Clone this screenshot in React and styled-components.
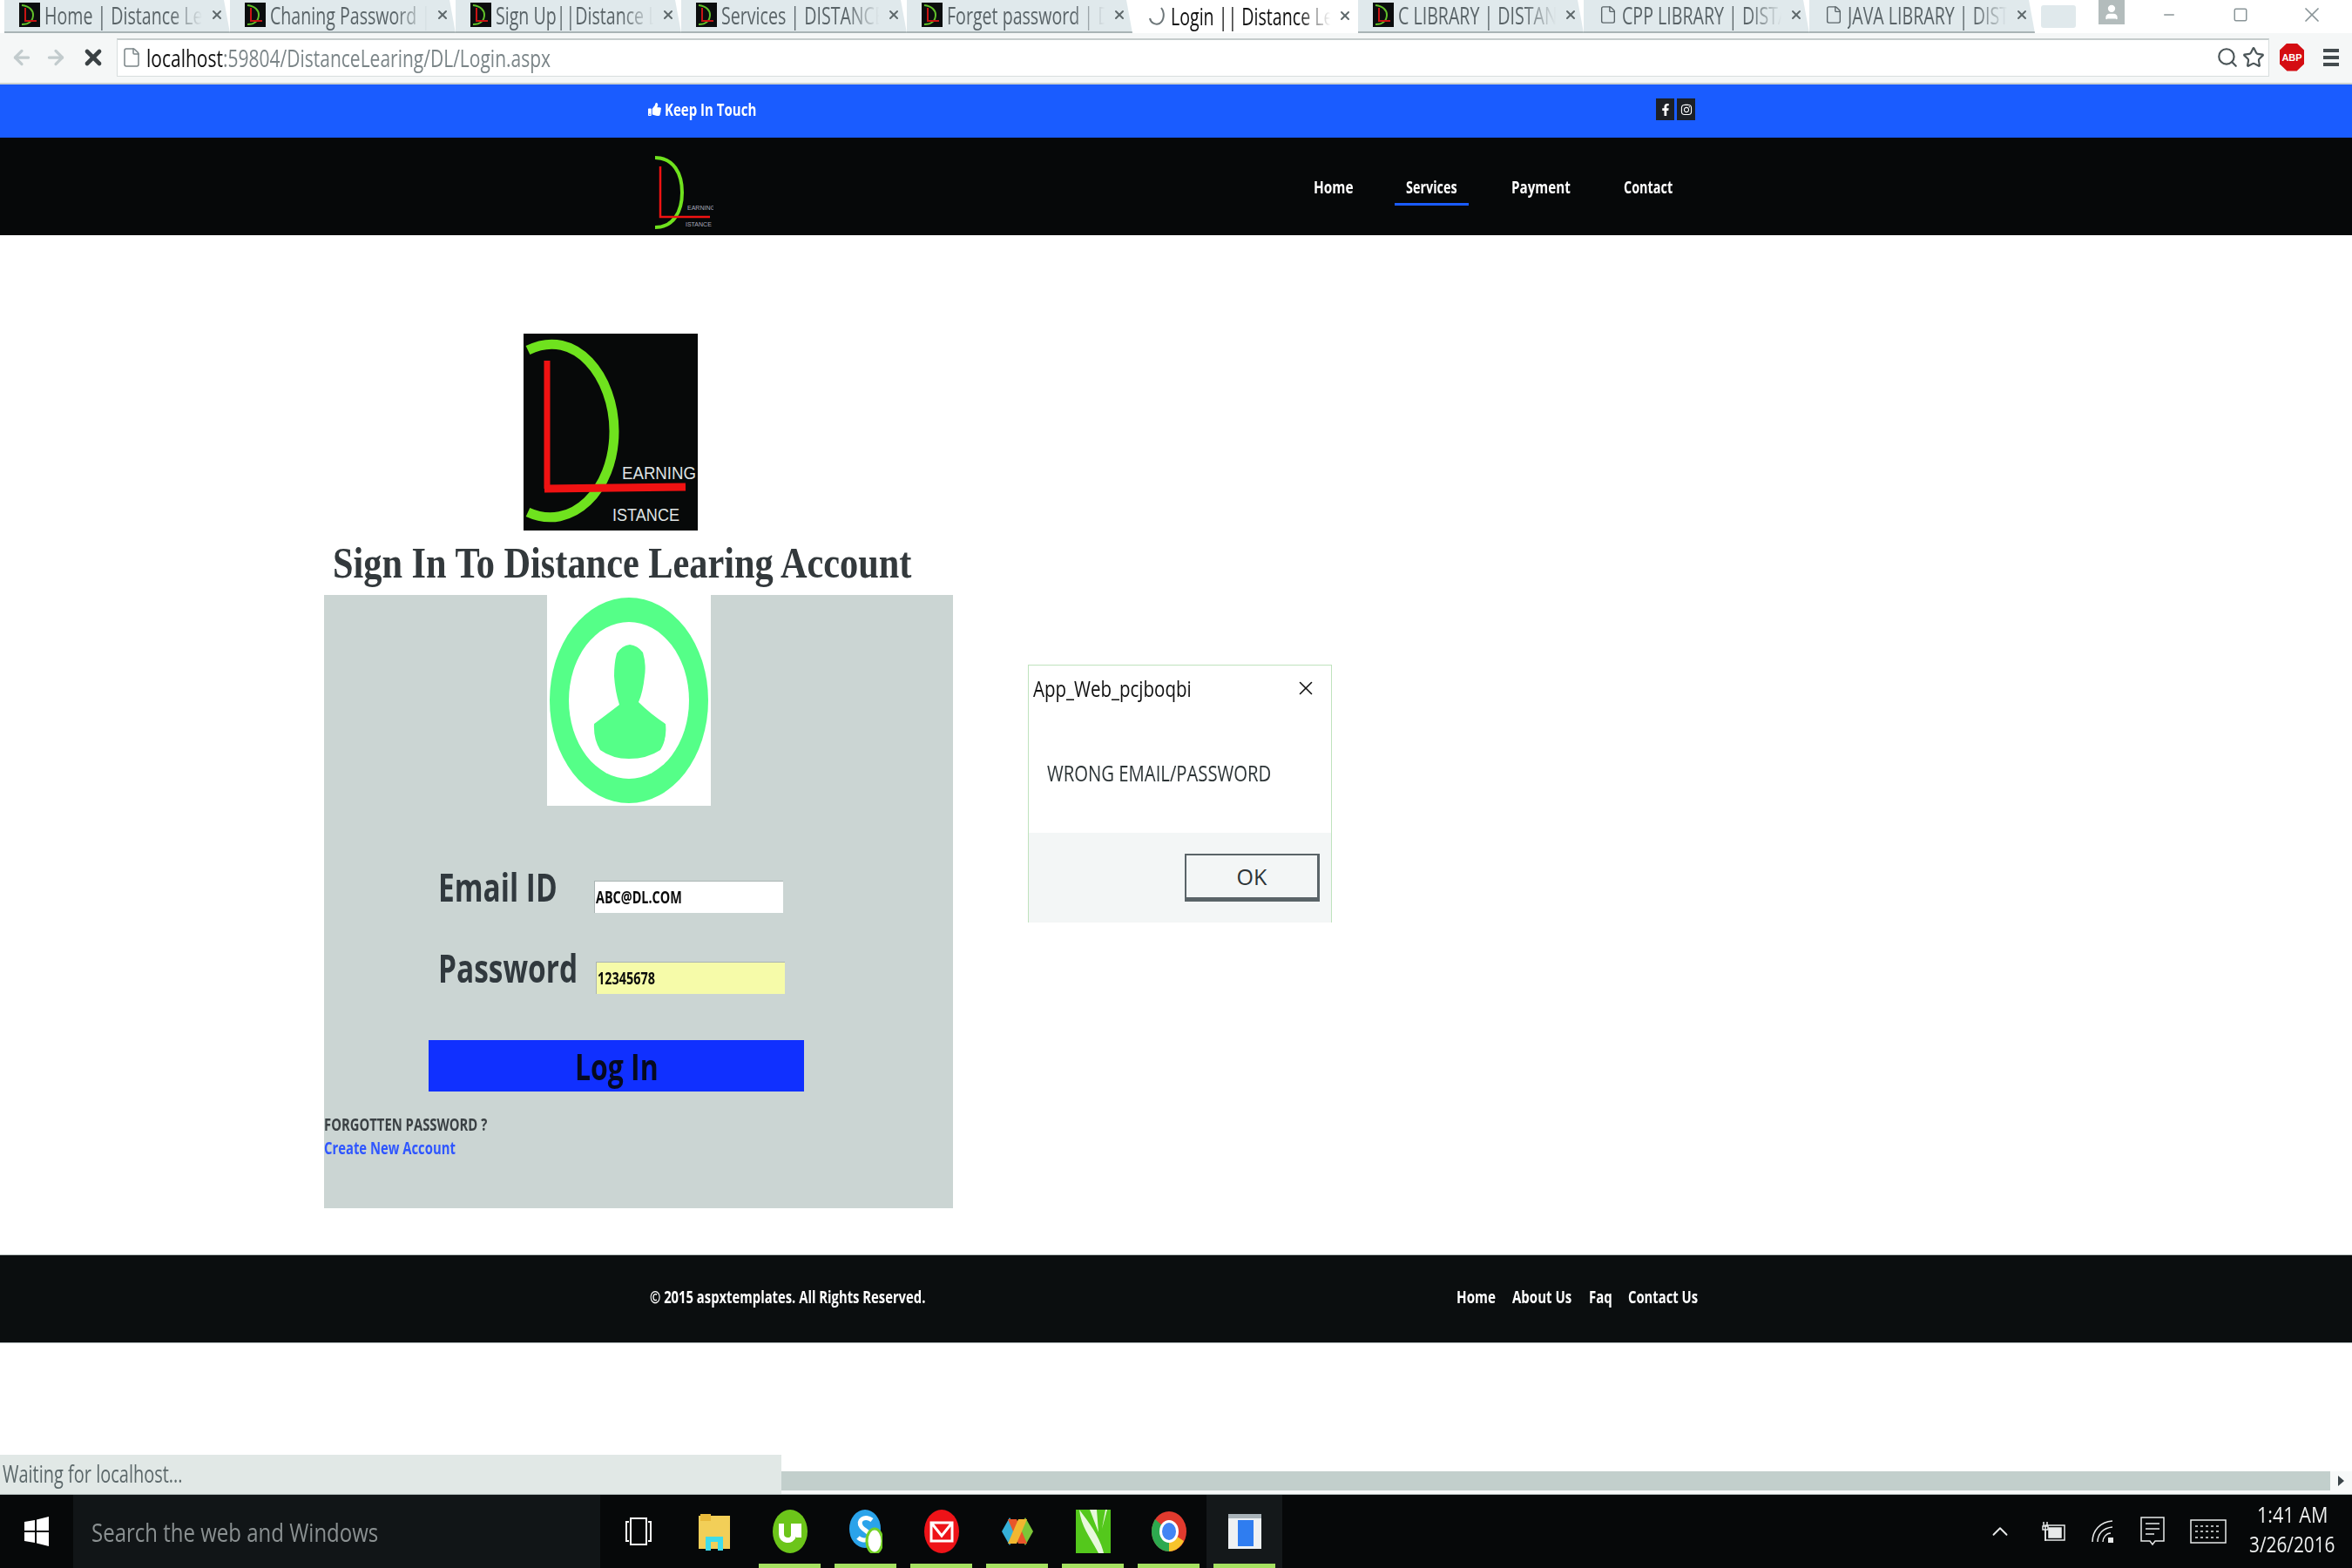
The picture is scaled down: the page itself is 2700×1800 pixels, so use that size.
import React from 'react';
import styled, { createGlobalStyle } from 'styled-components';
import { FaThumbsUp, FaFacebookF, FaInstagram } from 'react-icons/fa';
import { ArrowLeft, ArrowRight, X, File, Search, Star, ChevronUp, User, Minus, Square } from 'lucide-react';

const GlobalStyle = createGlobalStyle`
  html, body { margin: 0; padding: 0; background: #fff; }
  body { font-family: 'Open Sans', sans-serif; }
`;

const Page = styled.div`
  position: relative;
  width: 2700px;
  height: 1800px;
  overflow: hidden;
  display: flex;
  flex-direction: column;
  background: #fff;
`;

// the source picture is squashed sideways, so text is scaled on x and keeps a fixed layout width
const Squeeze = styled.span`
  display: inline-block;
  width: ${(p) => p.$w}px;
  white-space: nowrap;
  transform: scaleX(${(p) => p.$x});
  transform-origin: left center;
`;

/* browser chrome */
const TabStrip = styled.div`
  height: 38px;
  display: flex;
  align-items: flex-end;
  padding-left: 5px;
  background: #fff;
`;

const Tab = styled.div`
  width: 259px;
  height: 38px;
  box-sizing: border-box;
  display: flex;
  align-items: center;
  gap: 5px;
  padding: 0 7px 2px 17px;
  font-size: 28px;
  color: ${(p) => (p.$active ? '#111' : '#5a6468')};
  background: ${(p) => (p.$active ? '#fff' : '#e0e9ec')};
  border-bottom: ${(p) => (p.$active ? '0' : '2px solid #a9b4b6')};
  clip-path: polygon(0 0, 252px 0, 100% 100%, 0 100%);
`;

const TabTitle = styled.div`
  flex: 1;
  overflow: hidden;
  mask-image: linear-gradient(90deg, #000 78%, transparent 98%);
`;

const TabClose = styled(X)`
  flex: none;
  color: #5f696c;
`;

const NewTab = styled.div`
  width: 40px;
  height: 26px;
  margin: 0 0 6px 7px;
  background: #e0e9ec;
  border-radius: 3px;
`;

const WindowControls = styled.div`
  flex: 1;
  align-self: flex-start;
  display: flex;
  align-items: flex-start;
  color: #8a9598;
`;

const UserBadge = styled.div`
  width: 30px;
  height: 28px;
  margin: 0 10px 0 26px;
  display: flex;
  align-items: center;
  justify-content: center;
  background: #b3bcbc;
  color: #fff;
`;

const WindowButton = styled.div`
  width: 82px;
  height: 34px;
  display: flex;
  align-items: center;
  justify-content: center;
`;

const Toolbar = styled.div`
  height: 59px;
  box-sizing: border-box;
  display: flex;
  align-items: center;
  padding: 0 14px 2px 12px;
  background: #f5f7f7;
  border-bottom: 2px solid #ccd3d3;
`;

const NavIcons = styled.div`
  width: 122px;
  display: flex;
  align-items: center;
  gap: 13px;
  color: #c2cbcd;
`;

const StopIcon = styled(X)`
  color: #3a4144;
  margin-left: 3px;
`;

const AddressBar = styled.div`
  width: 2471px;
  height: 44px;
  box-sizing: border-box;
  display: flex;
  align-items: center;
  padding: 0 4px 0 4px;
  background: #fff;
  border: 1px solid #d8dede;
  border-top: 2px solid #c5cccc;
  font-size: 28px;
  color: #7b8588;
`;

const UrlBlock = styled.div`
  margin-left: 5px;
`;

const UrlHost = styled.span`
  color: #111;
`;

const AddressIcons = styled.div`
  margin-left: auto;
  display: flex;
  align-items: center;
  gap: 4px;
  color: #4b5558;
`;

const AbpBadge = styled.div`
  width: 28px;
  height: 32px;
  margin-left: 12px;
  flex: none;
  display: flex;
  align-items: center;
  justify-content: center;
  clip-path: polygon(30% 0, 70% 0, 100% 25%, 100% 75%, 70% 100%, 30% 100%, 0 75%, 0 25%);
  background: #d40d12;
  color: #fff;
  font: bold 11px 'Liberation Sans', sans-serif;
`;

const MenuBars = styled.div`
  width: 18px;
  margin-left: 22px;
  display: flex;
  flex-direction: column;
  gap: 4px;
  & > i { display: block; height: 4px; background: #444c4f; }
`;

/* site header */
const TopBar = styled.div`
  height: 61px;
  box-sizing: border-box;
  display: flex;
  align-items: center;
  padding: 0 0 4px 744px;
  background: #1a5cff;
  color: #fff;
  font-size: 19px;
  font-weight: 700;
  gap: 4px;
`;

const SocialRow = styled.div`
  display: flex;
  gap: 3px;
  margin-left: 1030px;
`;

const SocialIcon = styled.div`
  width: 21px;
  height: 25px;
  display: flex;
  align-items: center;
  justify-content: center;
  background: #1c2026;
  color: #fff;
  font-size: 14px;
`;

const NavBar = styled.div`
  height: 112px;
  display: flex;
  align-items: center;
  padding-left: 749px;
  background: #060809;
`;

const NavMenu = styled.nav`
  display: flex;
  margin-left: 689px;
`;

const NavItem = styled.a`
  height: 44px;
  display: flex;
  align-items: center;
  justify-content: center;
  margin-right: ${(p) => p.$gap}px;
  width: ${(p) => p.$w}px;
  color: #fff;
  font-size: 20px;
  font-weight: 700;
  border-bottom: 3px solid ${(p) => (p.$active ? '#1a5cff' : 'transparent')};
  box-sizing: border-box;
  padding-top: 3px;
`;

/* main content */
const Main = styled.main`
  height: 1170px;
  box-sizing: border-box;
  padding: 113px 0 0 372px;
`;

const BigLogo = styled.svg`
  display: block;
  width: 200px;
  height: 226px;
  margin-left: 229px;
`;

const Title = styled.h1`
  margin: 0;
  height: 74px;
  padding-left: 10px;
  display: flex;
  align-items: center;
  font: bold 51px 'Liberation Serif', serif;
  color: #33393c;
`;

const Panel = styled.div`
  width: 722px;
  height: 704px;
  background: #cbd5d3;
`;

const AvatarBox = styled.svg`
  display: block;
  width: 188px;
  height: 242px;
  margin-left: 256px;
  background: #fff;
`;

const FieldRow = styled.div`
  display: flex;
  align-items: center;
  height: 38px;
  margin-top: ${(p) => p.$top}px;
  padding-left: 131px;
`;

const FieldLabel = styled.label`
  flex: none;
  font-size: 44px;
  font-weight: 700;
  color: #31393e;
  width: ${(p) => p.$w}px;
  position: relative;
  top: -11px;
`;

const FieldInput = styled.div`
  width: 217px;
  height: 37px;
  box-sizing: border-box;
  padding-left: 1px;
  display: flex;
  align-items: center;
  background: ${(p) => p.$bg};
  border: 1px solid #aab4b3;
  border-width: 1px 0 0 1px;
  font-size: 20px;
  font-weight: 700;
  color: #0a0a0a;
`;

const LoginButton = styled.button`
  display: block;
  width: 431px;
  height: 59px;
  margin: 53px 0 0 120px;
  padding: 0 4px 0 0;
  border: 0;
  background: #1030ff;
  font: bold 42px 'Open Sans', sans-serif;
  color: #060a20;
  text-align: center;
`;

const HelpText = styled.div`
  margin-top: ${(p) => p.$top}px;
  font-size: 19px;
  font-weight: 700;
  line-height: 24px;
  color: ${(p) => p.$color};
`;

/* alert window */
const Dialog = styled.div`
  position: absolute;
  left: 1180px;
  top: 763px;
  width: 349px;
  height: 296px;
  box-sizing: border-box;
  display: flex;
  flex-direction: column;
  background: #fff;
  border: 1px solid #bfe3bd;
  border-width: 1px 1px 0 1px;
`;

const DialogHead = styled.div`
  height: 52px;
  box-sizing: border-box;
  display: flex;
  align-items: center;
  justify-content: space-between;
  padding: 0 16px 0 5px;
  font: 25px 'Open Sans', sans-serif;
  color: #111;
`;

const DialogMessage = styled.div`
  flex: 1;
  padding: 53px 0 0 21px;
  font: 26px 'Open Sans', sans-serif;
  color: #2c3436;
`;

const DialogFoot = styled.div`
  height: 103px;
  box-sizing: border-box;
  display: flex;
  justify-content: flex-end;
  padding: 24px 13px 0 0;
  background: #f3f6f6;
`;

const OkButton = styled.button`
  width: 155px;
  height: 55px;
  padding: 0;
  background: #f3f6f6;
  border: 2px solid #5a6468;
  border-bottom-width: 5px;
  border-right-width: 3px;
  font: 25px 'Open Sans', sans-serif;
  color: #2c3436;
`;

/* site footer */
const SiteFooter = styled.footer`
  height: 102px;
  box-sizing: border-box;
  display: flex;
  align-items: center;
  padding: 0 0 6px 746px;
  background: #0b0e0f;
  border-top: 1px solid #b7bfbf;
  border-bottom: 1px solid #b7bfbf;
  color: #fff;
  font-size: 20px;
  font-weight: 700;
`;

const FooterLinks = styled.div`
  display: flex;
  gap: 19px;
  margin-left: 610px;
`;

const Gap = styled.div`
  flex: 1;
`;

const ScrollRow = styled.div`
  height: 26px;
  display: flex;
  align-items: flex-start;
  padding-left: 897px;
  background: #f7f9f9;
`;

const ScrollThumb = styled.div`
  flex: 1;
  height: 22px;
  background: #c2cfcc;
`;

const ScrollArrow = styled.div`
  width: 25px;
  height: 22px;
  display: flex;
  align-items: center;
  justify-content: center;
  &::after {
    content: '';
    border-left: 7px solid #3a4448;
    border-top: 6px solid transparent;
    border-bottom: 6px solid transparent;
  }
`;

const StatusBubble = styled.div`
  position: absolute;
  left: 0;
  top: 1670px;
  width: 897px;
  height: 45px;
  box-sizing: border-box;
  display: flex;
  align-items: center;
  padding: 0 0 3px 3px;
  background: #e1e8e6;
  font-size: 27px;
  color: #5c686a;
`;

/* windows taskbar */
const Taskbar = styled.div`
  height: 85px;
  display: flex;
  align-items: stretch;
  background: #060809;
  border-top: 1px solid #aeb8b8;
  box-sizing: border-box;
  color: #fff;
`;

const StartButton = styled.div`
  width: 84px;
  display: flex;
  align-items: center;
  justify-content: center;
`;

const SearchBox = styled.div`
  width: 605px;
  display: flex;
  align-items: center;
  padding-left: 21px;
  box-sizing: border-box;
  background: #111517;
  font-size: 30px;
  color: #8b9192;
`;

const TaskIcons = styled.div`
  display: flex;
`;

const TaskIcon = styled.div`
  position: relative;
  width: 87px;
  display: flex;
  align-items: center;
  justify-content: center;
  box-sizing: border-box;
  background: ${(p) => (p.$focus ? '#14181a' : 'transparent')};
  & > svg { display: block; }
  &::after {
    content: '';
    display: ${(p) => (p.$running ? 'block' : 'none')};
    position: absolute;
    left: 8px;
    right: 8px;
    bottom: 0;
    height: 5px;
    background: #a5e060;
  }
`;

const Tray = styled.div`
  margin-left: auto;
  display: flex;
  align-items: center;
  color: #e8eaea;
`;

const TrayIcon = styled.div`
  display: flex;
  margin-right: ${(p) => p.$gap}px;
`;

const Clock = styled.div`
  width: 100px;
  margin-right: 20px;
  padding-bottom: 6px;
  font-size: 26px;
  line-height: 34px;
  text-align: center;
  color: #eef0f0;
`;

const Favicon = () => (
  <svg width="24" height="28" viewBox="0 0 24 28" style={{ flex: 'none' }}>
    <rect width="24" height="28" fill="#0b0d0e" />
    <path d="M3 3C12 4 16 9 16 14C16 20 12 25 3 25" fill="none" stroke="#62c12a" strokeWidth="2" />
    <path d="M7 6V21H20" fill="none" stroke="#c81414" strokeWidth="2" />
  </svg>
);

const tabs = [
  { title: 'Home | Distance Learning', icon: 'site' },
  { title: 'Chaning Password | Distance', icon: 'site' },
  { title: 'Sign Up||Distance Learning', icon: 'site' },
  { title: 'Services | DISTANCE LEARNING', icon: 'site' },
  { title: 'Forget password | Distance', icon: 'site' },
  { title: 'Login || Distance Learning', icon: 'spin', active: true },
  { title: 'C LIBRARY | DISTANCE', icon: 'site' },
  { title: 'CPP LIBRARY | DISTANCE', icon: 'doc' },
  { title: 'JAVA LIBRARY | DISTANCE', icon: 'doc' },
];

const TabIcon = ({ kind }) => {
  if (kind === 'site') return <Favicon />;
  if (kind === 'doc') return <File size={22} strokeWidth={1.5} style={{ flex: 'none' }} />;
  return (
    <svg width="22" height="26" viewBox="0 0 22 26" style={{ flex: 'none' }}>
      <path d="M16 4C20 9 20 18 14 22C9 24 4 21 3 16" fill="none" stroke="#6d7679" strokeWidth="2" />
    </svg>
  );
};

const Logo = () => (
  <BigLogo viewBox="0 0 200 226">
    <rect width="200" height="226" fill="#070909" />
    <path d="M5 19C60 -8 104 50 104 112C104 180 55 228 5 205" fill="none" stroke="#6fe21e" strokeWidth="11" />
    <path d="M27 31V178" fill="none" stroke="#f01212" strokeWidth="7" />
    <path d="M24 178L186 176" fill="none" stroke="#f01212" strokeWidth="9" />
    <text x="113" y="167" fontFamily="Liberation Sans" fontSize="20" fill="#dfe3e3" textLength="85" lengthAdjust="spacingAndGlyphs">EARNING</text>
    <text x="102" y="215" fontFamily="Liberation Sans" fontSize="20" fill="#dfe3e3" textLength="77" lengthAdjust="spacingAndGlyphs">ISTANCE</text>
  </BigLogo>
);

const SmallLogo = styled.svg`
  width: 70px;
  height: 84px;
  margin-top: 14px;
`;

const SmallMark = () => (
  <SmallLogo viewBox="0 0 70 84">
    <path d="M3 2C24 2 34 20 34 42C34 64 24 82 3 82" fill="none" stroke="#6fe21e" strokeWidth="4" />
    <path d="M9 12V70H66" fill="none" stroke="#f01212" strokeWidth="2.5" />
    <text x="40" y="62" fontFamily="Liberation Sans" fontSize="7" fill="#aab">EARNING</text>
    <text x="38" y="81" fontFamily="Liberation Sans" fontSize="7" fill="#aab">ISTANCE</text>
  </SmallLogo>
);

const Avatar = () => (
  <AvatarBox viewBox="0 0 188 242">
    <ellipse cx="94" cy="121" rx="91" ry="118" fill="#55ff88" />
    <ellipse cx="94" cy="121" rx="69" ry="90" fill="#fff" />
    <path
      d="M95 57Q104 58 110 66Q114 80 112 93Q110 112 105 123Q118 136 136 148Q138 165 130 178Q115 188 94 188Q75 188 61 178Q53 165 54 148Q70 136 83 126Q78 110 77 93Q77 78 80 67Q86 58 95 57Z"
      fill="#55ff88"
    />
  </AvatarBox>
);

const App = () => (
  <Page>
    <GlobalStyle />
    <TabStrip>
      {tabs.map((t) => (
        <Tab key={t.title} $active={t.active}>
          <TabIcon kind={t.icon} />
          <TabTitle>
            <Squeeze $w={190} $x={0.7}>{t.title}</Squeeze>
          </TabTitle>
          <TabClose size={16} strokeWidth={3} />
        </Tab>
      ))}
      <NewTab />
      <WindowControls>
        <UserBadge><User size={20} fill="#fff" /></UserBadge>
        <WindowButton><Minus size={18} /></WindowButton>
        <WindowButton><Square size={18} /></WindowButton>
        <WindowButton><X size={28} strokeWidth={1.5} /></WindowButton>
      </WindowControls>
    </TabStrip>
    <Toolbar>
      <NavIcons>
        <ArrowLeft size={26} strokeWidth={3} />
        <ArrowRight size={26} strokeWidth={3} />
        <StopIcon size={28} strokeWidth={4} />
      </NavIcons>
      <AddressBar>
        <File size={24} strokeWidth={1.5} />
        <UrlBlock>
          <Squeeze $w={470} $x={0.75}>
            <UrlHost>localhost</UrlHost>:59804/DistanceLearing/DL/Login.aspx
          </Squeeze>
        </UrlBlock>
        <AddressIcons>
          <Search size={26} />
          <Star size={26} />
        </AddressIcons>
      </AddressBar>
      <AbpBadge>ABP</AbpBadge>
      <MenuBars><i /><i /><i /></MenuBars>
    </Toolbar>
    <TopBar>
      <FaThumbsUp size={15} />
      <Squeeze $w={104} $x={0.79}>Keep In Touch</Squeeze>
      <SocialRow>
        <SocialIcon><FaFacebookF /></SocialIcon>
        <SocialIcon><FaInstagram /></SocialIcon>
      </SocialRow>
    </TopBar>
    <NavBar>
      <SmallMark />
      <NavMenu>
        <NavItem $w={45} $gap={48}><Squeeze $w={45} $x={0.77}>Home</Squeeze></NavItem>
        <NavItem $w={85} $gap={49} $active><Squeeze $w={60} $x={0.72}>Services</Squeeze></NavItem>
        <NavItem $w={67} $gap={62}><Squeeze $w={67} $x={0.76}>Payment</Squeeze></NavItem>
        <NavItem $w={57} $gap={0}><Squeeze $w={57} $x={0.72}>Contact</Squeeze></NavItem>
      </NavMenu>
    </NavBar>
    <Main>
      <Logo />
      <Title><Squeeze $w={665} $x={0.83}>Sign In To Distance Learing Account</Squeeze></Title>
      <Panel>
        <Avatar />
        <FieldRow $top={85}>
          <FieldLabel $w={179}><Squeeze $w={136} $x={0.76}>Email ID</Squeeze></FieldLabel>
          <FieldInput $bg="#fff"><Squeeze $w={100} $x={0.72}>ABC@DL.COM</Squeeze></FieldInput>
        </FieldRow>
        <FieldRow $top={55}>
          <FieldLabel $w={181}><Squeeze $w={160} $x={0.76}>Password</Squeeze></FieldLabel>
          <FieldInput $bg="#f6fba9"><Squeeze $w={67} $x={0.72}>12345678</Squeeze></FieldInput>
        </FieldRow>
        <LoginButton><Squeeze $w={91} $x={0.76}>Log In</Squeeze></LoginButton>
        <HelpText $top={26} $color="#3b4144"><Squeeze $w={187} $x={0.78}>FORGOTTEN PASSWORD ?</Squeeze></HelpText>
        <HelpText $top={3} $color="#2f56ff"><Squeeze $w={150} $x={0.78}>Create New Account</Squeeze></HelpText>
      </Panel>
    </Main>
    <SiteFooter>
      <Squeeze $w={316} $x={0.74}>© 2015 aspxtemplates. All Rights Reserved.</Squeeze>
      <FooterLinks>
        <Squeeze $w={45} $x={0.76}>Home</Squeeze>
        <Squeeze $w={69} $x={0.75}>About Us</Squeeze>
        <Squeeze $w={26} $x={0.75}>Faq</Squeeze>
        <Squeeze $w={81} $x={0.74}>Contact Us</Squeeze>
      </FooterLinks>
    </SiteFooter>
    <Gap />
    <ScrollRow>
      <ScrollThumb />
      <ScrollArrow />
    </ScrollRow>
    <StatusBubble><Squeeze $w={210} $x={0.74}>Waiting for localhost...</Squeeze></StatusBubble>
    <Dialog>
      <DialogHead>
        <Squeeze $w={182} $x={0.82}>App_Web_pcjboqbi</Squeeze>
        <X size={26} strokeWidth={1.5} />
      </DialogHead>
      <DialogMessage><Squeeze $w={259} $x={0.78}>WRONG EMAIL/PASSWORD</Squeeze></DialogMessage>
      <DialogFoot>
        <OkButton>OK</OkButton>
      </DialogFoot>
    </Dialog>
    <Taskbar>
      <StartButton>
        <svg width="28" height="34" viewBox="0 0 28 34">
          <path d="M0 6L12 4V16H0ZM14 3.5L28 0V16H14ZM0 18H12V30L0 28ZM14 18H28V34L14 30.5Z" fill="#fff" />
        </svg>
      </StartButton>
      <SearchBox><Squeeze $w={330} $x={0.8}>Search the web and Windows</Squeeze></SearchBox>
      <TaskIcons>
        <TaskIcon>
          <svg width="32" height="34" viewBox="0 0 32 34" fill="none" stroke="#fff" strokeWidth="2">
            <rect x="7" y="2" width="18" height="30" />
            <path d="M5 6H2V28H5M27 6H30V28H27" />
          </svg>
        </TaskIcon>
        <TaskIcon>
          <svg width="36" height="44" viewBox="0 0 36 44">
            <rect y="4" width="36" height="38" fill="#f2cf58" />
            <rect x="2" y="2" width="12" height="8" fill="#e8b93a" />
            <path d="M8 44V28H28V44H22V34H14V44Z" fill="#3fdcea" />
          </svg>
        </TaskIcon>
        <TaskIcon $running>
          <svg width="40" height="50" viewBox="0 0 40 50">
            <ellipse cx="20" cy="25" rx="20" ry="25" fill="#6cc51a" />
            <path d="M10 16V28C10 36 22 38 24 30V16M30 16V32" fill="none" stroke="#fff" strokeWidth="6" />
          </svg>
        </TaskIcon>
        <TaskIcon $running>
          <svg width="38" height="50" viewBox="0 0 38 50">
            <ellipse cx="18" cy="22" rx="18" ry="22" fill="#2aa3ea" />
            <path d="M26 12C18 6 8 12 14 20C18 25 26 26 22 33C18 37 12 34 10 32" fill="none" stroke="#fff" strokeWidth="5" />
            <ellipse cx="29" cy="36" rx="9" ry="14" fill="#fff" stroke="#74d126" strokeWidth="3" />
          </svg>
        </TaskIcon>
        <TaskIcon $running>
          <svg width="40" height="50" viewBox="0 0 40 50">
            <ellipse cx="20" cy="25" rx="20" ry="25" fill="#ee1318" />
            <path d="M8 15H32V36H8ZM8 15L20 30L32 15" fill="none" stroke="#fff" strokeWidth="3" />
          </svg>
        </TaskIcon>
        <TaskIcon $running>
          <svg width="38" height="36" viewBox="0 0 38 36">
            <path d="M10 2L20 18L10 34L1 18Z" fill="#35b0d8" />
            <path d="M28 2L37 18L28 34L18 18Z" fill="#7cc638" />
            <path d="M8 4H18L30 32H20Z" fill="#e8562a" />
            <path d="M30 4H20L8 32H18Z" fill="#f2b730" />
          </svg>
        </TaskIcon>
        <TaskIcon $running>
          <svg width="40" height="50" viewBox="0 0 40 50">
            <rect width="40" height="50" fill="#54c81c" />
            <path d="M4 0C6 20 18 34 26 50H32C28 32 16 16 4 0ZM16 0L26 26L24 0ZM34 0L30 22L36 0Z" fill="#e8f8dc" />
          </svg>
        </TaskIcon>
        <TaskIcon $running>
          <svg width="40" height="46" viewBox="0 0 40 46">
            <ellipse cx="20" cy="23" rx="20" ry="23" fill="#e23a2e" />
            <path d="M20 23L37 34C33 42 26 46 20 46Z" fill="#f7c42b" />
            <path d="M20 46C8 46 0 35 0 23C0 17 2 13 4 9L20 23Z" fill="#2da94f" />
            <ellipse cx="20" cy="23" rx="11" ry="13" fill="#fff" />
            <ellipse cx="20" cy="23" rx="8" ry="10" fill="#4285f4" />
          </svg>
        </TaskIcon>
        <TaskIcon $running $focus>
          <svg width="38" height="40" viewBox="0 0 38 40">
            <rect width="38" height="40" fill="#eef1f3" />
            <rect x="0" y="0" width="38" height="5" fill="#a8b2b8" />
            <rect x="11" y="7" width="18" height="30" fill="#2f7df0" />
          </svg>
        </TaskIcon>
      </TaskIcons>
      <Tray>
        <TrayIcon $gap={33}><ChevronUp size={30} strokeWidth={1.5} /></TrayIcon>
        <TrayIcon $gap={29}>
          <svg width="28" height="24" viewBox="0 0 28 24" fill="none" stroke="currentColor" strokeWidth="1.5">
            <rect x="4" y="5" width="22" height="17" />
            <rect x="8" y="8" width="14" height="11" fill="currentColor" />
            <path d="M2 1V6M6 1V6M1 6H7V10H1ZM4 10V23" />
          </svg>
        </TrayIcon>
        <TrayIcon $gap={30}>
          <svg width="26" height="26" viewBox="0 0 26 26" fill="none" stroke="currentColor" strokeWidth="1.5">
            <path d="M1 25C1 12 10 2 24 1M7 25C7 16 13 9 24 8M13 25C13 20 17 15 22 15" />
            <rect x="19" y="20" width="6" height="6" fill="currentColor" stroke="none" />
          </svg>
        </TrayIcon>
        <TrayIcon $gap={29}>
          <svg width="28" height="34" viewBox="0 0 28 34" fill="none" stroke="currentColor" strokeWidth="1.5">
            <path d="M1 1H27V28H17L14 32L11 28H1Z" />
            <path d="M6 8H22M6 14H22M6 20H16" />
          </svg>
        </TrayIcon>
        <TrayIcon $gap={24}>
          <svg width="42" height="28" viewBox="0 0 42 28" fill="none" stroke="currentColor" strokeWidth="1.5">
            <rect x="1" y="1" width="40" height="26" />
            <path d="M6 8H36M6 14H36M6 21H36" strokeDasharray="3 3" />
          </svg>
        </TrayIcon>
        <Clock>
          <Squeeze $w={78} $x={0.83}>1:41 AM</Squeeze>
          <br />
          <Squeeze $w={96} $x={0.8}>3/26/2016</Squeeze>
        </Clock>
      </Tray>
    </Taskbar>
  </Page>
);

export default App;
